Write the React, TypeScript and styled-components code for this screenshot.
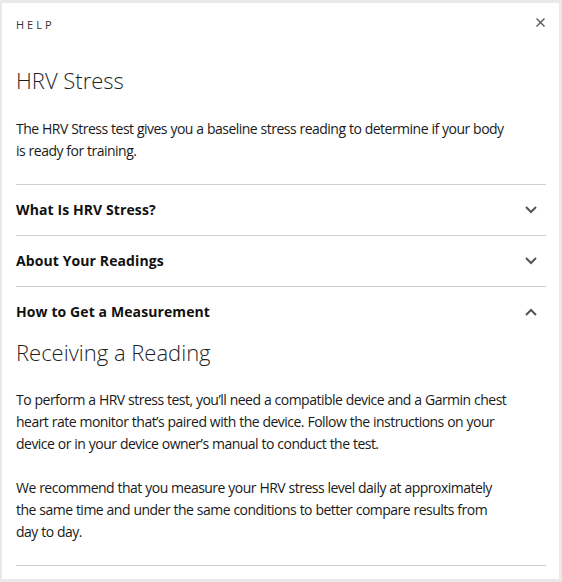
import React from "react";
import styled, { createGlobalStyle } from "styled-components";

const Global = createGlobalStyle`
  html, body { margin: 0; padding: 0; background: #e9e9e9; }
  body { font-family: "Open Sans", "Liberation Sans", sans-serif; color: #1f1f1f; }
  * { box-sizing: border-box; }
`;

const Frame = styled.div`
  padding: 3px 3px 3px 2px;
  background: #e9e9e9;
`;

const Panel = styled.section`
  background: #fff;
  padding: 14px 13px 13px 14px;
  display: flex;
  flex-direction: column;
`;

const Header = styled.header`
  display: flex;
  align-items: center;
  justify-content: space-between;
  height: 16px;
`;

const Eyebrow = styled.div`
  font-size: 11px;
  line-height: 16px;
  letter-spacing: 3px;
  color: #333;
  text-transform: uppercase;
`;

const CloseButton = styled.button`
  border: 0;
  background: none;
  padding: 0;
  margin: 0 1px 0 0;
  width: 10px;
  height: 10px;
  display: flex;
  align-items: center;
  justify-content: center;
  cursor: pointer;
  transform: translateY(-3px);
`;

const Title = styled.h1<{ $top: number }>`
  margin: ${(p) => p.$top}px 0 0;
  font-size: 22px;
  line-height: 30px;
  font-weight: 300;
  color: #1f1f1f;
`;

const Text = styled.p<{ $top: number }>`
  margin: ${(p) => p.$top}px 0 0;
  font-size: 14px;
  line-height: 22px;
  letter-spacing: -0.52px;
  word-spacing: 0.3px;
  max-width: 496px;
  color: #1a1a1a;
`;

const Accordion = styled.div`
  margin-top: 22px;
  border-top: 1px solid #cfcfcf;
`;

const Item = styled.div<{ $open?: boolean }>`
  border-bottom: ${(p) => (p.$open ? "none" : "1px solid #cfcfcf")};
`;

const ItemHead = styled.div`
  height: 50px;
  display: flex;
  align-items: center;
  justify-content: space-between;
  padding-right: 9px;
`;

const ItemTitle = styled.h2`
  margin: 0;
  font-size: 14px;
  line-height: 22px;
  font-weight: 700;
  letter-spacing: 0.1px;
  color: #111;
`;

const ItemBody = styled.div`
  padding-bottom: 22px;
  border-bottom: 1px solid #cfcfcf;
`;

const Chevron = ({ up }: { up?: boolean }) => (
  <svg width="12" height="8" viewBox="0 0 12 8" fill="none">
    <path
      d={up ? "M1 7 L6 2 L11 7" : "M1 1 L6 6 L11 1"}
      stroke="#555"
      strokeWidth="2"
      strokeLinecap="butt"
    />
  </svg>
);

const items = [
  { title: "What Is HRV Stress?" },
  { title: "About Your Readings" },
];

export default function App() {
  return (
    <Frame>
      <Global />
      <Panel>
        <Header>
          <Eyebrow>Help</Eyebrow>
          <CloseButton aria-label="Close">
            <svg width="9" height="9" viewBox="0 0 9 9">
              <path d="M0.5 0.5 L8.5 8.5 M8.5 0.5 L0.5 8.5" stroke="#555" strokeWidth="1.3" />
            </svg>
          </CloseButton>
        </Header>
        <Title $top={32}>HRV Stress</Title>
        <Text $top={23}>
          The HRV Stress test gives you a baseline stress reading to determine if your body is
          ready for training.
        </Text>
        <Accordion>
          {items.map((it) => (
            <Item key={it.title}>
              <ItemHead>
                <ItemTitle>{it.title}</ItemTitle>
                <Chevron />
              </ItemHead>
            </Item>
          ))}
          <Item $open>
            <ItemHead>
              <ItemTitle>How to Get a Measurement</ItemTitle>
              <Chevron up />
            </ItemHead>
            <ItemBody>
              <Title $top={0}>Receiving a Reading</Title>
              <Text $top={22}>
                To perform a HRV stress test, you’ll need a compatible device and a Garmin chest
                heart rate monitor that’s paired with the device. Follow the instructions on your
                device or in your device owner’s manual to conduct the test.
              </Text>
              <Text $top={22}>
                We recommend that you measure your HRV stress level daily at approximately the
                same time and under the same conditions to better compare results from day to day.
              </Text>
            </ItemBody>
          </Item>
        </Accordion>
      </Panel>
    </Frame>
  );
}
